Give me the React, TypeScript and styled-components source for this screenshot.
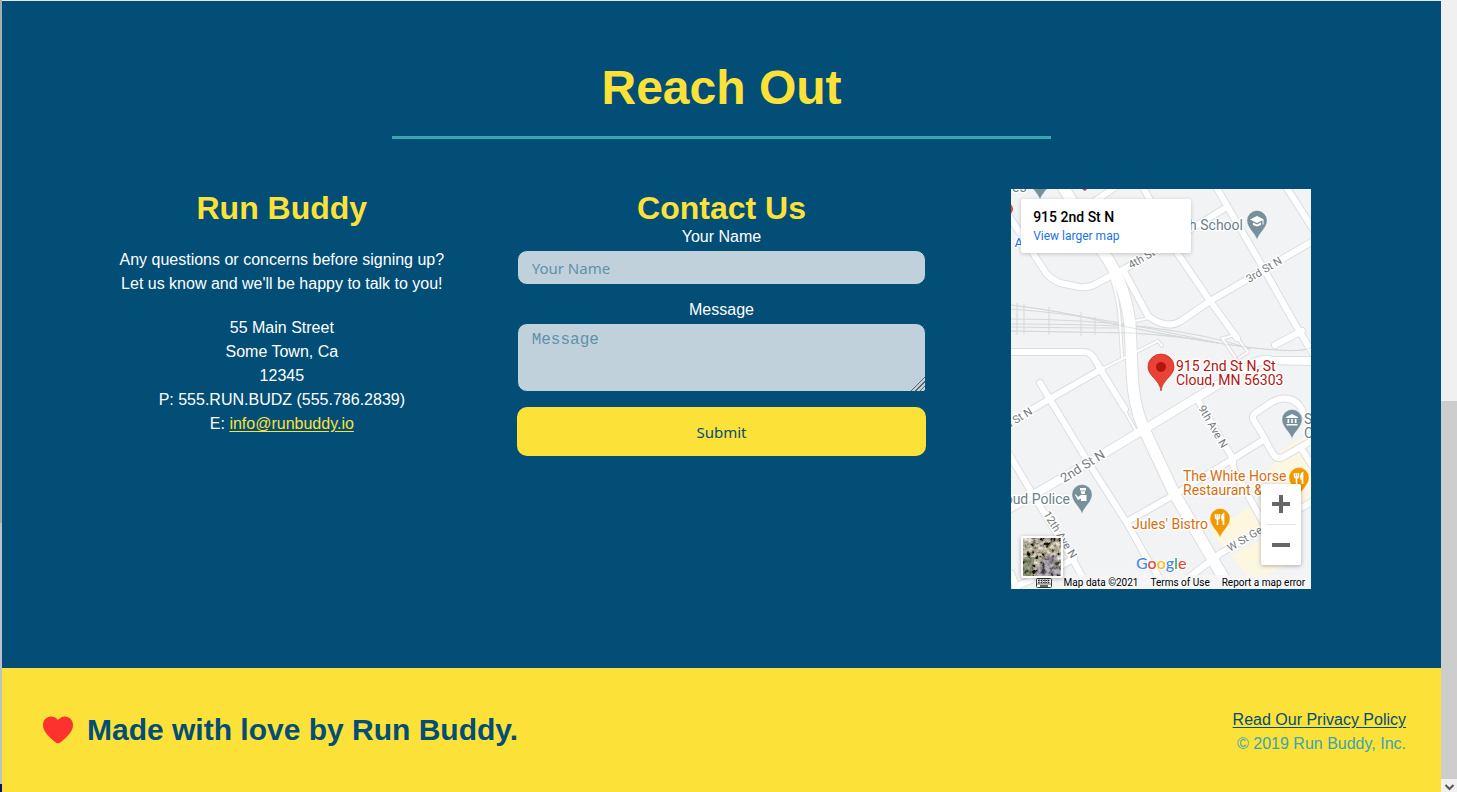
import React from 'react';
import styled, { createGlobalStyle, css } from 'styled-components';

const colors = {
  navy: '#024e76',
  yellow: '#fce138',
  teal: '#39a6b2',
  field: '#c0d1db',
  placeholder: '#5e92ac',
};

const GlobalStyle = createGlobalStyle`
  *, *::before, *::after { box-sizing: border-box; }
  body {
    margin: 0;
    font-family: "Liberation Sans", Arial, Helvetica, sans-serif;
    font-size: 16px;
    line-height: 24px;
  }
  h1, h2, h3, p, address { margin: 0; font-style: normal; }
  a { text-underline-offset: 2px; }
`;

const Frame = styled.div`
  display: flex;
  min-height: 100vh;
`;

const WindowEdge = styled.div`
  flex: none;
  width: 2px;
  background: linear-gradient(#a8adb0 0 66%, #bcc0cc 66% 99%, #0a1070 99%);
`;

const Page = styled.div`
  flex: 1;
  min-width: 0;
  display: flex;
  flex-direction: column;
  border-top: 1px solid #e4edf2;
  background: ${colors.navy};
`;

const ReachOut = styled.section`
  flex: 1;
  padding: 60px 60px 79px;
  text-align: center;
  color: #fff;
`;

const SectionTitle = styled.h2`
  width: 50%;
  margin: 0 auto 50px;
  padding-bottom: 22px;
  border-bottom: 3px solid ${colors.teal};
  font-size: 48px;
  line-height: 53px;
  color: ${colors.yellow};
`;

const Columns = styled.div`
  display: grid;
  grid-template-columns: repeat(3, minmax(0, 1fr));
  align-items: start;
`;

const Column = styled.div`
  padding: 0 15px;
`;

const MapColumn = styled.div`
  display: flex;
  justify-content: center;
`;

const ColumnTitle = styled.h3`
  font-size: 32px;
  line-height: 38px;
  color: ${colors.yellow};
`;

const Details = styled.div`
  display: flex;
  flex-direction: column;
  gap: 20px;
  margin-top: 21px;
`;

const MailLink = styled.a`
  color: ${colors.yellow};
`;

const Form = styled.form`
  display: flex;
  flex-direction: column;
`;

const Label = styled.label`
  line-height: 20px;
`;

const fieldStyle = css`
  display: block;
  width: 100%;
  margin: 3px 0 15px;
  padding: 4px 14px;
  border: 1px solid ${colors.navy};
  border-radius: 10px;
  background: ${colors.field};
  color: ${colors.navy};
  line-height: 24px;
  &::placeholder { color: ${colors.placeholder}; opacity: 1; }
`;

const TextInput = styled.input`
  ${fieldStyle}
  height: 35px;
  font-family: "Noto Sans", Tahoma, sans-serif;
  font-size: 15px;
`;

const MessageBox = styled.textarea`
  ${fieldStyle}
  height: 69px;
  resize: both;
  font-family: "Liberation Mono", "Courier New", monospace;
  font-size: 16px;
  &::-webkit-resizer {
    background:
      linear-gradient(135deg, ${colors.field} 50%, transparent 50%),
      repeating-linear-gradient(135deg, ${colors.field} 0 2px, #5c666c 2px 3px);
  }
`;

const SubmitButton = styled.button`
  height: 49px;
  border: 0;
  border-radius: 10px;
  background: ${colors.yellow};
  color: ${colors.navy};
  font: 15px/24px "Noto Sans", Tahoma, sans-serif;
  cursor: pointer;
`;

const MapBox = styled.div`
  position: relative;
  width: 300px;
  height: 400px;
  overflow: hidden;
  background: #f1f3f4;
  font-family: Roboto, Arial, sans-serif;
  text-align: left;
`;

const MapDrawing = styled.svg`
  display: block;
`;

const PlaceCard = styled.div`
  position: absolute;
  top: 10px;
  left: 10px;
  width: 170px;
  height: 54px;
  padding: 8px 12px;
  border-radius: 2px;
  background: #fff;
  box-shadow: 0 1px 4px rgba(0, 0, 0, 0.2);
`;

const PlaceName = styled.div`
  font-size: 14px;
  font-weight: 500;
  line-height: 20px;
  color: #000;
`;

const LargerLink = styled.a`
  display: block;
  font-size: 12px;
  line-height: 18px;
  color: #1a73e8;
  text-decoration: none;
`;

const ZoomControl = styled.div`
  position: absolute;
  right: 10px;
  bottom: 24px;
  width: 40px;
  padding: 0 5px;
  border-radius: 2px;
  background: #fff;
  box-shadow: 0 1px 4px rgba(0, 0, 0, 0.3);
`;

const ZoomButton = styled.button`
  display: flex;
  align-items: center;
  justify-content: center;
  width: 100%;
  height: 40px;
  padding: 0;
  border: 0;
  background: none;
  & + & { height: 41px; border-top: 1px solid #e6e6e6; }
`;

const LayerButton = styled.button`
  position: absolute;
  left: 10px;
  bottom: 11px;
  width: 42px;
  height: 42px;
  padding: 0;
  border: 2px solid #fff;
  border-radius: 2px;
  overflow: hidden;
  box-shadow: 0 1px 4px rgba(0, 0, 0, 0.3);
  svg { display: block; }
`;

const Attribution = styled.div`
  position: absolute;
  right: 0;
  bottom: 0;
  display: flex;
  align-items: center;
  gap: 12px;
  height: 14px;
  padding: 2px 6px 0 2px;
  background: rgba(245, 245, 245, 0.75);
  font-size: 10px;
  line-height: 12px;
  white-space: nowrap;
  color: #000;
  a { color: #000; text-decoration: none; }
`;

const Footer = styled.footer`
  display: flex;
  justify-content: space-between;
  align-items: flex-start;
  padding: 40px 35px 36px 40px;
  background: ${colors.yellow};
`;

const MadeWithLove = styled.h2`
  display: flex;
  align-items: center;
  gap: 13px;
  font-size: 30px;
  line-height: 44px;
  color: ${colors.navy};
`;

const Legal = styled.div`
  text-align: right;
  color: ${colors.teal};
  a { color: ${colors.navy}; }
`;

const ScrollTrack = styled.div`
  flex: none;
  display: flex;
  flex-direction: column;
  justify-content: flex-end;
  width: 16px;
  background: #f0f0f0;
`;

const ScrollThumb = styled.div`
  height: calc(48% - 2px);
  background: #cdcdcd;
`;

const ScrollArrow = styled.svg`
  display: block;
  flex: none;
`;

const wideRoads = [
  { d: 'M51 -4 L88 58 Q113 88 119 135 L121 181 Q122 214 132 238 L163 304 L222 405', w: 11 },
];

const mediumRoads = [
  { d: 'M-4 321 L77 274 L137 238 L241 175 Q250 170 259 171 L304 172', w: 8 },
];

const roads = [
  'M-4 24 L35 84 Q40 90 49 94 L68 98 Q80 99 88 93 L117 78 L216 18',
  'M131 -4 L167 65 L199 112 L226 149',
  'M204 -4 L254 82 L284 135 L304 168',
  'M274 -4 L304 43',
  'M304 51 L199 112 L170 132 Q160 138 150 134 Q139 130 136 125 L114 84',
  'M84 12 L106 -3',
  'M-4 163 L72 163 Q79 163 83 169 L91 183 L114 220',
  'M-4 235 L37 211 L91 180',
  'M29 194 L77 273 L116 334 L134 366 L153 396',
  'M-4 262 L21 304 L61 369 L80 404',
  'M186 210 L221 268 L223 281 L248 326 L260 346',
  'M117 332 L163 306 L217 273 L254 250 L242 230 Q241 226 246 223 L261 213 Q270 208 278 210 Q287 212 291 221 L304 244',
  'M254 251 L262 265 Q266 271 272 268 L304 250',
  'M290 259 L304 281',
  'M160 402 L210 364 L304 311',
  'M264 156 L291 142',
  'M0 384 L6 400 M4 398 L20 391 M50 377 L63 369',
];

const lanes = [
  'M100 88 Q108 110 109 135 L111 168',
  'M124 132 L138 129',
  'M89 181 L147 152 L151 157',
  'M113 218 L115 224 L126 244',
  'M211 149 L224 168 M213 149 L224 146 L237 163 L228 169',
];

const rails = [
  'M0 116 Q50 122 90 132 T207 154 T300 159',
  'M0 120 Q55 124 104 133 T207 154',
  'M0 130 Q70 130 135 138 T240 160',
  'M0 135 Q70 135 135 138',
  'M0 138 Q60 139 110 139',
  'M0 142 Q60 143 120 144 Q170 147 207 154',
  'M6 114 V146 M13 115 V145 M38 118 V146 M70 123 V147 M84 128 V146 M114 133 V147',
];

interface PinProps {
  x: number;
  y: number;
  color: string;
  children?: React.ReactNode;
}

const Pin = ({ x, y, color, children }: PinProps) => (
  <g transform={`translate(${x} ${y})`}>
    <path
      d="M0 18.500 C-2 12 -10 7 -10 -.5 A10 10 0 1 1 10 -.5 C10 7 2 12 0 18.500 Z"
      fill={color}
      stroke="#fff"
      strokeOpacity="0.6"
      strokeWidth="0.5"
    />
    {children}
  </g>
);

const Cutlery = () => (
  <g fill="none" stroke="#fff">
    <path d="M-4.500 -5 V-2 Q-4.500 0 -2.500 0 Q-.5 0 -.5 -2 V-5 M-2.500 -5 V6" strokeWidth="1.500" />
    <path d="M3.500 6 V-5 Q1.500 -4 2.200 1 H3.500" strokeWidth="1.700" />
  </g>
);

const MapLabel = styled.text<{ $tone?: string; $size?: number }>`
  fill: ${(p) => p.$tone ?? '#6b7f8a'};
  font-size: ${(p) => p.$size ?? 14}px;
  stroke: #fff;
  stroke-width: 3px;
  stroke-linejoin: round;
  paint-order: stroke;
`;

const StreetMap = () => (
  <MapDrawing width="300" height="400" viewBox="0 0 300 400" role="img" aria-label="Map of 915 2nd St N, St Cloud">
    <rect width="300" height="400" fill="#f1f3f4" />
    <g fill="#fef7e0">
      <path d="M199 341 L250 312 L262 330 L212 360 Z" />
      <path d="M257 281 L267 271 L293 261 L300 272 V312 L262 325 Z" />
      <path d="M220 366 L253 350 L280 374 L250 388 L233 384 Z" />
      <path d="M267 263 L300 244 V250 L270 266 Z" />
    </g>
    <g fill="none" stroke="#d5d8da" strokeWidth="1">
      {rails.map((d) => <path key={d} d={d} />)}
    </g>
    <g fill="none" stroke="#dcdfe2" strokeLinejoin="round" strokeLinecap="round">
      {lanes.map((d) => <path key={d} d={d} strokeWidth="4" />)}
      {roads.map((d) => <path key={d} d={d} strokeWidth="8" />)}
      {[...mediumRoads, ...wideRoads].map((r) => <path key={r.d} d={r.d} strokeWidth={r.w + 2} />)}
    </g>
    <g fill="none" stroke="#fff" strokeLinejoin="round" strokeLinecap="round">
      {lanes.map((d) => <path key={d} d={d} strokeWidth="2" />)}
      {roads.map((d) => <path key={d} d={d} strokeWidth="6" />)}
      {[...mediumRoads, ...wideRoads].map((r) => <path key={r.d} d={r.d} strokeWidth={r.w} />)}
    </g>
    <path d={rails[0]} fill="none" stroke="#d5d8da" strokeOpacity="0.7" />
    <path d={rails[5]} fill="none" stroke="#d5d8da" strokeOpacity="0.7" />

    <MapLabel $size={11} $tone="#75797d" transform="translate(120 80) rotate(-30)">4th St N</MapLabel>
    <MapLabel $size={11} $tone="#75797d" transform="translate(238 94) rotate(-31)">3rd St N</MapLabel>
    <MapLabel $size={11} $tone="#75797d" transform="translate(-3 240) rotate(-32)">d St N</MapLabel>
    <MapLabel $size={13} $tone="#75797d" transform="translate(53 294) rotate(-32)">2nd St N</MapLabel>
    <MapLabel $size={11} $tone="#75797d" transform="translate(187 219) rotate(60)">9th Ave N</MapLabel>
    <MapLabel $size={11} $tone="#75797d" transform="translate(32 325) rotate(58)">12th Ave N</MapLabel>
    <MapLabel $size={11} $tone="#75797d" transform="translate(219 363) rotate(-31)">W St Germain</MapLabel>

    <circle cx="-4" cy="20" r="6" fill="#ea4335" />
    <MapLabel x="1" y="3">es</MapLabel>
    <MapLabel x="12" y="58" textAnchor="end" $size={13} $tone="#1a73e8">n A</MapLabel>
    <path d="M71 0 h5 l-2 2 z" fill="#e91e63" />
    <MapLabel x="232" y="41" textAnchor="end">h School</MapLabel>
    <MapLabel x="59" y="315" textAnchor="end">oud Police</MapLabel>
    <MapLabel x="293" y="235">St</MapLabel>
    <MapLabel x="293" y="249">Cl</MapLabel>
    <MapLabel x="172" y="292" $tone="#d56e0c">The White Horse</MapLabel>
    <MapLabel x="172" y="306" $tone="#d56e0c">Restaurant &amp;</MapLabel>
    <MapLabel x="121" y="340" $tone="#d56e0c">Jules&apos; Bistro</MapLabel>
    <MapLabel x="165" y="182" $tone="#b31412">915 2nd St N, St</MapLabel>
    <MapLabel x="165" y="196" $tone="#b31412">Cloud, MN 56303</MapLabel>

    <Pin x={29} y={-8} color="#78909c" />
    <Pin x={246} y={32} color="#78909c">
      <path d="M-7 -1.500 L0 -5 L7 -1.500 L0 2 Z M-4 1.500 L0 3.500 L4 1.500 V4 L0 5.500 L-4 4 Z M5.500 -1 H6.500 V3.500 H5.500 Z" fill="#fff" />
    </Pin>
    <Pin x={281} y={231} color="#78909c">
      <path d="M-6 -2 V-3 L0 -6 L6 -3 V-2 Z M-4.500 -1 H-2.800 V3 H-4.500 Z M-.8 -1 H.8 V3 H-.8 Z M2.800 -1 H4.500 V3 H2.800 Z M-5.500 4 H5.500 V5.500 H-5.500 Z" fill="#fff" />
    </Pin>
    <Pin x={71} y={306} color="#78909c">
      <path d="M-2 -7 H4 V-4.500 H-2 Z M-1 -3.800 H3 V-1.500 Q1 0 -1 -1.500 Z M-6.500 -1 L-4 2 L-1 0 H4.500 V6 H-1 V3.500 L-4 5 L-7 0 Z" fill="#fff" />
    </Pin>
    <Pin x={288} y={289} color="#f29900"><Cutlery /></Pin>
    <Pin x={209} y={330} color="#f29900"><Cutlery /></Pin>

    <path
      d="M150 202 C149 191 137 187 137 178 A13 13 0 0 1 163 178 C163 187 151 191 150 202 Z"
      fill="#ea4335"
      stroke="#c5221f"
      strokeWidth="0.7"
    />
    <circle cx="150" cy="178" r="5" fill="#b31412" />

    <text
      x="125"
      y="380"
      fontFamily="Lato, sans-serif"
      fontWeight="500"
      fontSize="16"
      stroke="#fff"
      strokeWidth="2"
      paintOrder="stroke"
    >
      <tspan fill="#4285f4">G</tspan>
      <tspan fill="#ea4335">o</tspan>
      <tspan fill="#fbbc04">o</tspan>
      <tspan fill="#4285f4">g</tspan>
      <tspan fill="#34a853">l</tspan>
      <tspan fill="#ea4335">e</tspan>
    </text>
  </MapDrawing>
);

const SatelliteThumb = () => (
  <svg width="38" height="38" viewBox="0 0 38 38" aria-hidden="true">
    <filter id="terrain" x="0" y="0" width="100%" height="100%">
      <feTurbulence type="fractalNoise" baseFrequency="0.22" numOctaves="3" seed="8" />
      <feColorMatrix values="2.200 0 0 0 -.65  2.100 .1 0 0 -.67  2 0 .2 0 -.75  0 0 0 0 1" />
    </filter>
    <rect width="38" height="38" fill="#74705f" />
    <rect width="38" height="38" filter="url(#terrain)" opacity="0.85" />
    <path d="M0 11 Q18 15 38 9" stroke="#c3b59b" strokeWidth="3" fill="none" opacity="0.5" />
    <path d="M12 38 L20 18 L34 17 L38 38 Z" fill="#77719a" opacity="0.4" />
    <path d="M0 19 H12 L8 38 H0 Z" fill="#50633e" opacity="0.45" />
  </svg>
);

const KeyboardIcon = () => (
  <svg width="16" height="10" viewBox="0 0 16 10" aria-hidden="true">
    <rect x="0.5" y="0.5" width="15" height="9" rx="1" fill="#fff" stroke="#333" />
    <path d="M2 2.500 H14 M2 4.500 H14" stroke="#333" strokeWidth="1" strokeDasharray="1.500 1" />
    <path d="M0 6 H16 M3 1 V6 M6 1 V6 M9 1 V6 M12 1 V6" stroke="#333" strokeWidth="0.7" />
    <path d="M4 8 H12" stroke="#333" strokeWidth="1.500" />
  </svg>
);

const HeartIcon = () => (
  <svg width="32" height="28" viewBox="0 0 32 28" aria-hidden="true">
    <path
      d="M16 4 C13 0 9 0.500 8 .7 C3.500 1.200 1 5 1 9 C1 15 6 20 13 26 Q16 28.500 19 26 C26 20 31 15 31 9 C31 5 28.500 1.200 24 .7 C22 .4 19 .5 16 4 Z"
      fill="#fd312e"
    />
  </svg>
);

export default function App() {
  return (
    <>
      <GlobalStyle />
      <Frame>
        <WindowEdge />
        <Page>
          <ReachOut>
            <SectionTitle>Reach Out</SectionTitle>
            <Columns>
              <Column>
                <ColumnTitle>Run Buddy</ColumnTitle>
                <Details>
                  <p>
                    Any questions or concerns before signing up?
                    <br />
                    Let us know and we&apos;ll be happy to talk to you!
                  </p>
                  <address>
                    55 Main Street
                    <br />
                    Some Town, Ca
                    <br />
                    12345
                    <br />
                    P: 555.RUN.BUDZ (555.786.2839)
                    <br />
                    E: <MailLink href="mailto:info@runbuddy.io">info@runbuddy.io</MailLink>
                  </address>
                </Details>
              </Column>
              <Column>
                <ColumnTitle>Contact Us</ColumnTitle>
                <Form onSubmit={(e) => e.preventDefault()}>
                  <Label htmlFor="contact-name">Your Name</Label>
                  <TextInput id="contact-name" type="text" placeholder="Your Name" />
                  <Label htmlFor="contact-message">Message</Label>
                  <MessageBox id="contact-message" placeholder="Message" />
                  <SubmitButton type="submit">Submit</SubmitButton>
                </Form>
              </Column>
              <MapColumn>
                <MapBox>
                  <StreetMap />
                  <PlaceCard>
                    <PlaceName>915 2nd St N</PlaceName>
                    <LargerLink href="#map">View larger map</LargerLink>
                  </PlaceCard>
                  <Attribution>
                    <KeyboardIcon />
                    <span>Map data ©2021</span>
                    <a href="#terms">Terms of Use</a>
                    <a href="#report">Report a map error</a>
                  </Attribution>
                  <LayerButton type="button" aria-label="Show satellite imagery">
                    <SatelliteThumb />
                  </LayerButton>
                  <ZoomControl>
                    <ZoomButton type="button" aria-label="Zoom in">
                      <svg width="18" height="18" viewBox="0 0 18 18">
                        <path d="M0 9 H18 M9 0 V18" stroke="#666" strokeWidth="4" />
                      </svg>
                    </ZoomButton>
                    <ZoomButton type="button" aria-label="Zoom out">
                      <svg width="18" height="18" viewBox="0 0 18 18">
                        <path d="M0 9 H18" stroke="#666" strokeWidth="4" />
                      </svg>
                    </ZoomButton>
                  </ZoomControl>
                </MapBox>
              </MapColumn>
            </Columns>
          </ReachOut>
          <Footer>
            <MadeWithLove>
              <HeartIcon />
              Made with love by Run Buddy.
            </MadeWithLove>
            <Legal>
              <a href="#privacy">Read Our Privacy Policy</a>
              <p>© 2019 Run Buddy, Inc.</p>
            </Legal>
          </Footer>
        </Page>
        <ScrollTrack aria-hidden="true">
          <ScrollThumb />
          <ScrollArrow width="16" height="13" viewBox="0 0 16 13">
            <path d="M4.500 6 L8.500 10 L12.500 6" fill="none" stroke="#555" strokeWidth="2" />
          </ScrollArrow>
        </ScrollTrack>
      </Frame>
    </>
  );
}
